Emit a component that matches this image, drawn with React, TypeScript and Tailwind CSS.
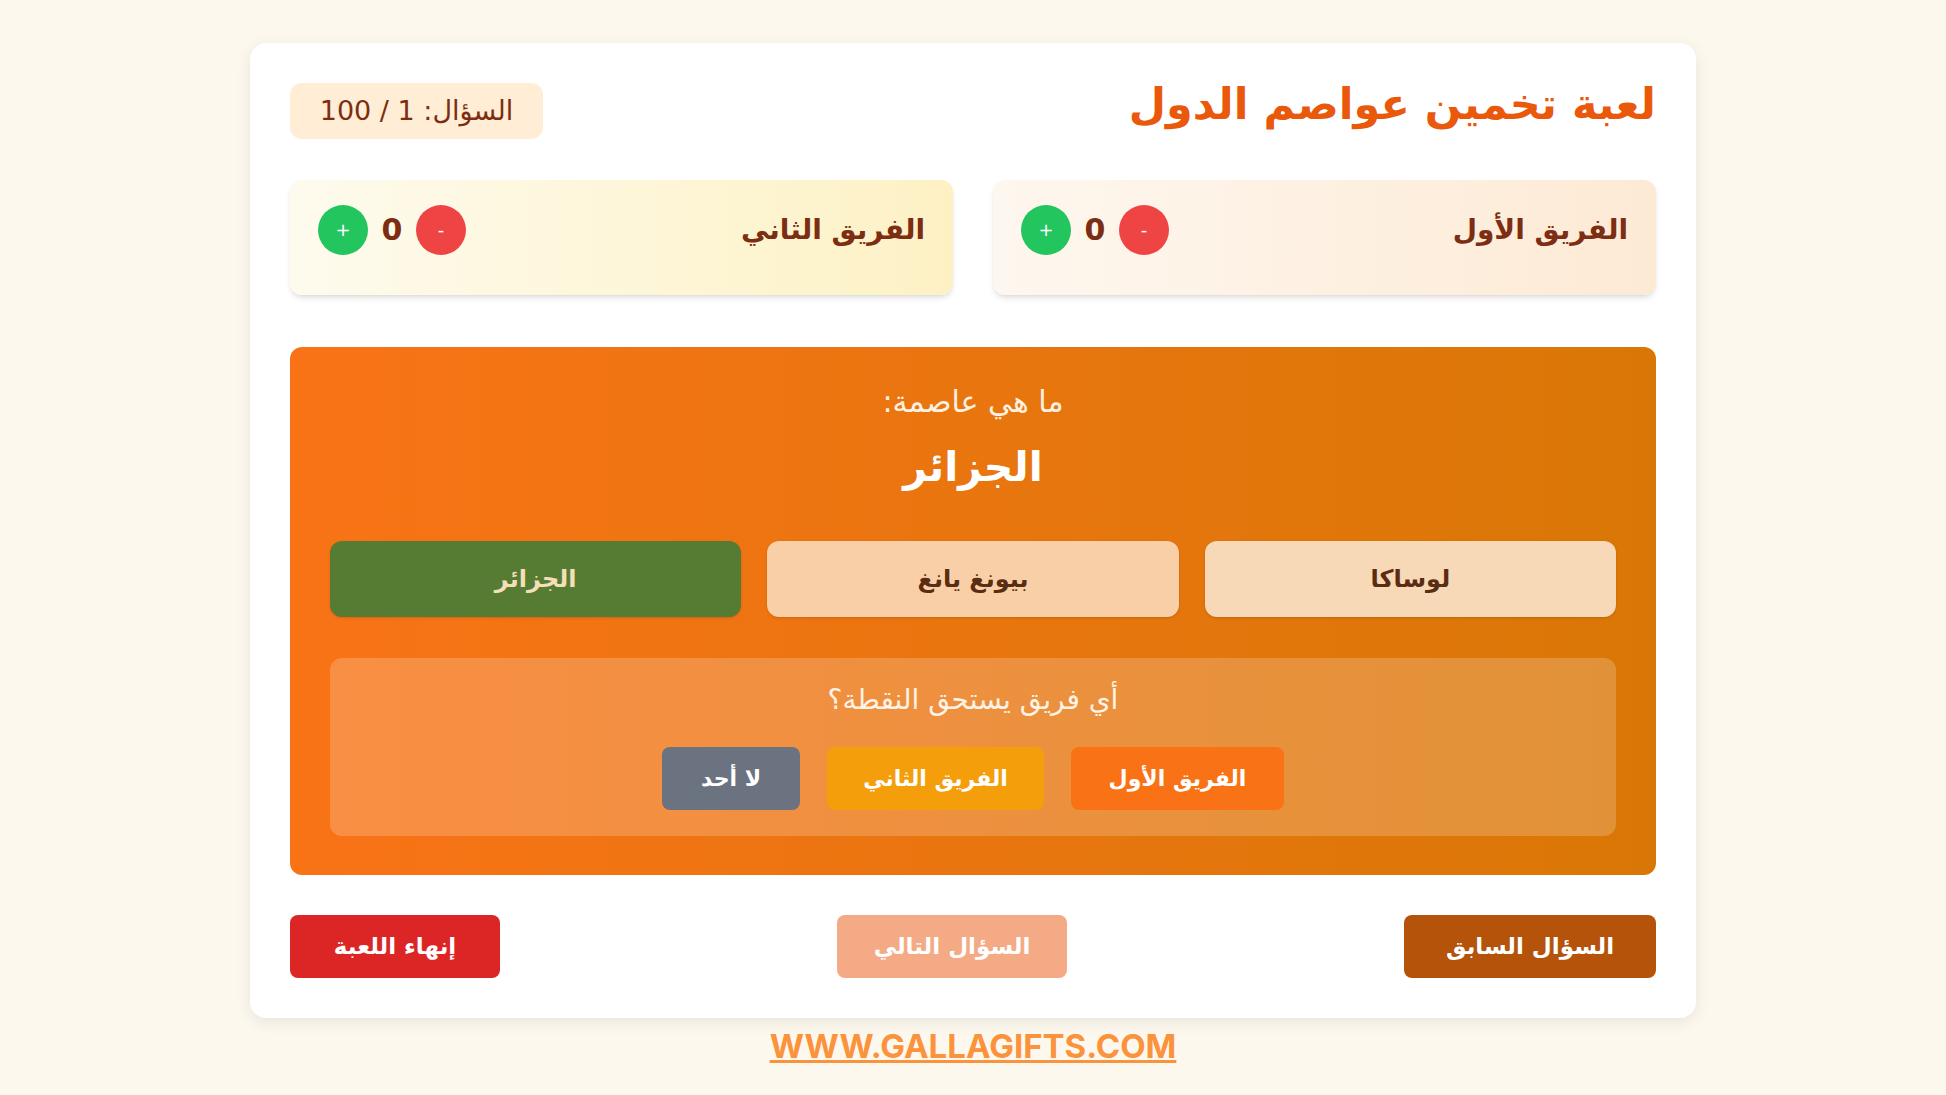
import React from "react";

const ar = { fontFamily: '"DejaVu Sans", "Noto Sans", sans-serif' };

function TeamCard({ name, bg }: { name: string; bg: string }) {
  return (
    <div className={`flex h-[115px] items-center justify-between rounded-xl px-7 pb-4 shadow-md ${bg}`}>
      <span className="text-[28px] font-bold text-[#7c2d12]">{name}</span>
      {/* minus, score, plus (rtl order) */}
      <div className="flex items-center gap-3" dir="rtl">
        <button className="flex h-[50px] w-[50px] items-center justify-center rounded-full bg-[#ef4444] text-lg text-white">
          -
        </button>
        <span className="w-[24px] text-center text-[30px] font-bold text-[#7c2d12]">0</span>
        <button className="flex h-[50px] w-[50px] items-center justify-center rounded-full bg-[#22c55e] text-lg text-white">
          +
        </button>
      </div>
    </div>
  );
}

export default function App() {
  const options = [
    { label: "لوساكا", cls: "bg-[#f7d9b8] text-[#5a2d12]" },
    { label: "بيونغ يانغ", cls: "bg-[#f8cfa6] text-[#5a2d12]" },
    { label: "الجزائر", cls: "bg-[#567c34] text-[#f5dfb8]" },
  ];

  return (
    <div className="min-h-screen bg-[#fdf8ee] pt-[43px]" style={ar}>
      <div dir="rtl" className="mx-auto w-[1446px] rounded-2xl bg-white p-10 shadow-[0_4px_16px_rgba(0,0,0,0.08)]">
        {/* header */}
        <div className="flex items-start justify-between">
          <h1 className="text-[43px] font-bold leading-[42px] text-[#ea580c]">لعبة تخمين عواصم الدول</h1>
          <div className="flex h-[56px] w-[253px] items-center justify-center rounded-xl bg-[#ffedd5] text-[27px] text-[#7c2d12]">
            السؤال: 1 / 100
          </div>
        </div>

        {/* teams */}
        <div className="mt-[41px] grid grid-cols-2 gap-10">
          <TeamCard name="الفريق الأول" bg="bg-linear-to-l from-[#fdead5] to-[#fef7ef]" />
          <TeamCard name="الفريق الثاني" bg="bg-linear-to-l from-[#fdf1c4] to-[#fefbee]" />
        </div>

        {/* question panel */}
        <div className="mt-[52px] rounded-xl bg-linear-to-r from-[#f97316] to-[#d97706] px-10 pb-[39px] pt-[35px] text-center">
          <p className="text-[30px] leading-[40px] text-[#fff1e2]">ما هي عاصمة:</p>
          <h2 className="mt-[15px] text-[41px] font-bold leading-[60px] text-white">الجزائر</h2>

          <div className="mt-[44px] grid grid-cols-3 gap-[26px]">
            {options.map((o) => (
              <button
                key={o.label}
                className={`h-[76px] rounded-xl text-[24px] font-bold shadow-sm ${o.cls}`}
              >
                {o.label}
              </button>
            ))}
          </div>

          <div className="mt-[41px] rounded-xl bg-white/20 px-6 pb-[26px] pt-[22px]">
            <p className="text-[28px] leading-[40px] text-[#fff3e6]">أي فريق يستحق النقطة؟</p>
            <div className="mt-[27px] flex justify-center gap-[27px]">
              <button className="h-[63px] w-[213px] rounded-lg bg-[#f97316] text-[22px] font-bold text-white">
                الفريق الأول
              </button>
              <button className="h-[63px] w-[217px] rounded-lg bg-[#f59e0b] text-[22px] font-bold text-white">
                الفريق الثاني
              </button>
              <button className="h-[63px] w-[138px] rounded-lg bg-[#6b7280] text-[22px] font-bold text-white">
                لا أحد
              </button>
            </div>
          </div>
        </div>

        {/* navigation */}
        <div className="mt-10 flex items-center justify-between">
          <button className="h-[63px] w-[252px] rounded-lg bg-[#b45309] text-[23px] font-bold text-white">
            السؤال السابق
          </button>
          <button className="h-[63px] w-[230px] rounded-lg bg-[#ea580c]/50 text-[23px] font-bold text-white">
            السؤال التالي
          </button>
          <button className="h-[63px] w-[210px] rounded-lg bg-[#dc2626] text-[23px] font-bold text-white">
            إنهاء اللعبة
          </button>
        </div>
      </div>

      <div className="pt-[4px] text-center">
        <a
          href="#"
          className="text-[33px] font-bold text-[#fb923c] underline"
          style={{ fontFamily: 'Inter, "Open Sans", sans-serif' }}
        >
          WWW.GALLAGIFTS.COM
        </a>
      </div>
    </div>
  );
}
